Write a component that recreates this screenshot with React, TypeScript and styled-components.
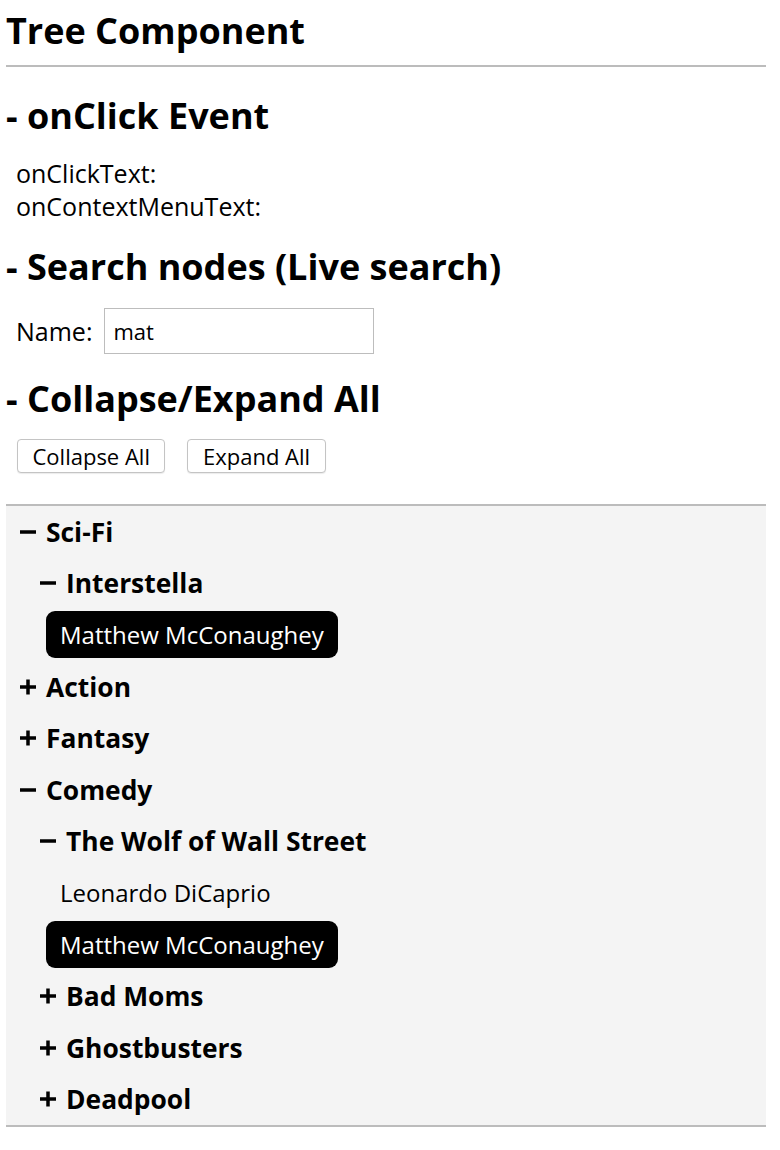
import { useState } from "react";
import styled, { createGlobalStyle } from "styled-components";

const GlobalStyle = createGlobalStyle`
  body {
    margin: 0;
    background: #fff;
    color: #000;
    font-family: "Open Sans", "Noto Sans", sans-serif;
  }
`;

const Page = styled.div`
  width: 760px;
  padding: 8px 6px 0;
`;

const Title = styled.h1`
  margin: 0;
  font-size: 36px;
  font-weight: 700;
  line-height: 46px;
`;

const Divider = styled.hr`
  margin: 11px 0 0;
  height: 2px;
  border: none;
  background: #bcbcbc;
`;

const Section = styled.section<{ $top: number; $gap: number }>`
  display: flex;
  flex-direction: column;
  align-items: flex-start;
  gap: ${(p) => p.$gap}px;
  margin-top: ${(p) => p.$top}px;
`;

const SectionTitle = styled.h2`
  margin: 0;
  font-size: 36px;
  font-weight: 700;
  line-height: 44px;
`;

const Info = styled.div`
  padding-left: 10px;
  font-size: 25px;
  line-height: 33px;
`;

const NameRow = styled.label`
  display: flex;
  align-items: center;
  gap: 12px;
  padding-left: 10px;
  font-size: 25px;
`;

const SearchInput = styled.input`
  box-sizing: border-box;
  width: 270px;
  height: 46px;
  padding: 0 8px;
  border: 1px solid #bdbdbd;
  border-radius: 0;
  font-family: inherit;
  font-size: 22px;
  color: #000;
  &:focus {
    outline: none;
  }
`;

const ButtonRow = styled.div`
  display: flex;
  gap: 22px;
  padding-left: 11px;
`;

const Button = styled.button`
  height: 34px;
  padding: 0 14.5px;
  background: #fff;
  border: 1px solid #c4c4c4;
  border-radius: 4px;
  box-shadow: 0 1px 1px rgba(0, 0, 0, 0.08);
  font-family: inherit;
  font-size: 22px;
  color: #000;
  cursor: pointer;
`;

const TreePanel = styled.div`
  margin-top: 31px;
  background: #f4f4f4;
  border-top: 2px solid #bcbcbc;
  border-bottom: 2px solid #bcbcbc;
`;

const BranchRow = styled.div<{ $level: number }>`
  display: flex;
  align-items: center;
  height: 51.6px;
  padding-left: ${(p) => 14 + p.$level * 20}px;
  cursor: pointer;
`;

const Toggle = styled.span`
  display: flex;
  align-items: center;
  width: 26px;
  flex-shrink: 0;
`;

const BranchLabel = styled.span`
  font-size: 26.4px;
  font-weight: 700;
`;

const LeafRow = styled.div<{ $level: number }>`
  display: flex;
  align-items: center;
  height: 51.6px;
  padding-left: ${(p) => p.$level * 20}px;
`;

const LeafLabel = styled.span<{ $active: boolean }>`
  display: flex;
  align-items: center;
  height: 47px;
  padding: 0 14px;
  border-radius: 9px;
  font-size: 24px;
  background: ${(p) => (p.$active ? "#000" : "transparent")};
  color: ${(p) => (p.$active ? "#fff" : "#000")};
`;

interface TreeNode {
  id: string;
  name: string;
  children?: TreeNode[];
}

const data: TreeNode[] = [
  {
    id: "scifi",
    name: "Sci-Fi",
    children: [
      {
        id: "interstella",
        name: "Interstella",
        children: [{ id: "i-mm", name: "Matthew McConaughey" }],
      },
    ],
  },
  {
    id: "action",
    name: "Action",
    children: [{ id: "a-1", name: "Die Hard", children: [{ id: "a-1-1", name: "Bruce Willis" }] }],
  },
  {
    id: "fantasy",
    name: "Fantasy",
    children: [{ id: "f-1", name: "Harry Potter", children: [{ id: "f-1-1", name: "Daniel Radcliffe" }] }],
  },
  {
    id: "comedy",
    name: "Comedy",
    children: [
      {
        id: "wolf",
        name: "The Wolf of Wall Street",
        children: [
          { id: "w-ld", name: "Leonardo DiCaprio" },
          { id: "w-mm", name: "Matthew McConaughey" },
        ],
      },
      { id: "badmoms", name: "Bad Moms", children: [{ id: "b-1", name: "Mila Kunis" }] },
      { id: "ghost", name: "Ghostbusters", children: [{ id: "g-1", name: "Bill Murray" }] },
      { id: "deadpool", name: "Deadpool", children: [{ id: "d-1", name: "Ryan Reynolds" }] },
    ],
  },
];

const allBranchIds = (nodes: TreeNode[]): string[] =>
  nodes.flatMap((n) => (n.children ? [n.id, ...allBranchIds(n.children)] : []));

function ToggleIcon({ open }: { open: boolean }) {
  return (
    <svg width="16" height="16" viewBox="0 0 16 16" fill="#000">
      <rect x="0" y="6.25" width="16" height="3.5" />
      {!open && <rect x="6.25" y="0.5" width="3.5" height="15" />}
    </svg>
  );
}

export default function App() {
  const [search, setSearch] = useState("mat");
  const [clickText, setClickText] = useState("");
  const [menuText, setMenuText] = useState("");
  const [open, setOpen] = useState<Record<string, boolean>>({
    scifi: true,
    interstella: true,
    comedy: true,
    wolf: true,
  });

  const toggle = (id: string) => setOpen((o) => ({ ...o, [id]: !o[id] }));
  const setAll = (value: boolean) =>
    setOpen(Object.fromEntries(allBranchIds(data).map((id) => [id, value])));

  const query = search.trim().toLowerCase();

  const renderNodes = (nodes: TreeNode[], level: number): React.ReactNode =>
    nodes.map((node) => {
      if (!node.children) {
        const active = query !== "" && node.name.toLowerCase().includes(query);
        return (
          <LeafRow
            key={node.id}
            $level={level}
            onClick={() => setClickText(node.name)}
            onContextMenu={(e) => {
              e.preventDefault();
              setMenuText(node.name);
            }}
          >
            <LeafLabel $active={active}>{node.name}</LeafLabel>
          </LeafRow>
        );
      }
      const isOpen = !!open[node.id];
      return (
        <div key={node.id}>
          <BranchRow
            $level={level}
            onClick={() => {
              toggle(node.id);
              setClickText(node.name);
            }}
            onContextMenu={(e) => {
              e.preventDefault();
              setMenuText(node.name);
            }}
          >
            <Toggle>
              <ToggleIcon open={isOpen} />
            </Toggle>
            <BranchLabel>{node.name}</BranchLabel>
          </BranchRow>
          {isOpen && renderNodes(node.children, level + 1)}
        </div>
      );
    });

  return (
    <>
      <GlobalStyle />
      <Page>
        <Title>Tree Component</Title>
        <Divider />

        <Section $top={27} $gap={19}>
          <SectionTitle>- onClick Event</SectionTitle>
          <Info>
            <div>onClickText: {clickText}</div>
            <div>onContextMenuText: {menuText}</div>
          </Info>
        </Section>

        <Section $top={22} $gap={19}>
          <SectionTitle>- Search nodes (Live search)</SectionTitle>
          <NameRow>
            Name:
            <SearchInput
              autoFocus
              value={search}
              onChange={(e) => setSearch(e.target.value)}
            />
          </NameRow>
        </Section>

        <Section $top={23} $gap={18}>
          <SectionTitle>- Collapse/Expand All</SectionTitle>
          <ButtonRow>
            <Button onClick={() => setAll(false)}>Collapse All</Button>
            <Button onClick={() => setAll(true)}>Expand All</Button>
          </ButtonRow>
        </Section>

        <TreePanel>{renderNodes(data, 0)}</TreePanel>
      </Page>
    </>
  );
}
